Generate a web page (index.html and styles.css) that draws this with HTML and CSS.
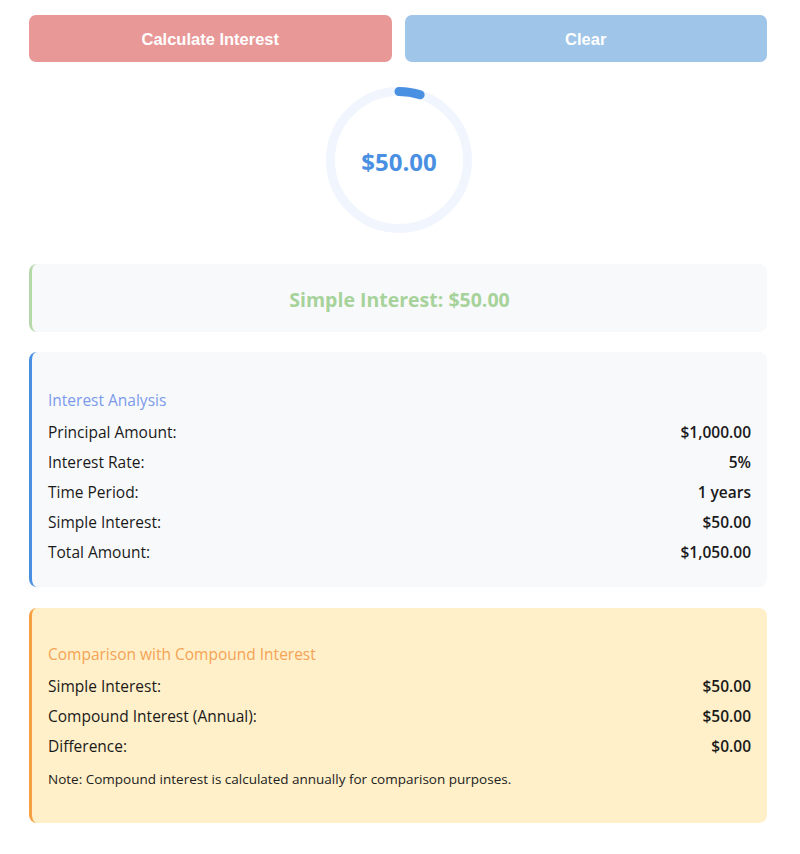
FILE: index.html
```html
<!DOCTYPE html>
<html lang="en">
<head>
<meta charset="utf-8">
<title>Simple Interest Calculator</title>
<link rel="stylesheet" href="styles.css">
</head>
<body>
<div class="app">
  <div class="actions">
    <button class="btn btn-calc" type="button">Calculate Interest</button>
    <button class="btn btn-clear" type="button">Clear</button>
  </div>

  <div class="gauge-wrap">
    <div class="gauge">
      <svg class="gauge-svg" width="146" height="146" viewBox="0 0 146 146">
        <circle cx="73" cy="73" r="68.5" fill="none" stroke="#f1f5fd" stroke-width="9"/>
        <circle cx="73" cy="73" r="68.5" fill="none" stroke="#4a90e2" stroke-width="9" stroke-linecap="round"
          stroke-dasharray="21.5 500" transform="rotate(-90 73 73)"/>
      </svg>
      <div class="gauge-value">$50.00</div>
    </div>
  </div>

  <div class="result">Simple Interest: $50.00</div>

  <div class="panel panel-analysis">
    <h4 class="panel-title">Interest Analysis</h4>
    <div class="row"><span>Principal Amount:</span><strong>$1,000.00</strong></div>
    <div class="row"><span>Interest Rate:</span><strong>5%</strong></div>
    <div class="row"><span>Time Period:</span><strong>1 years</strong></div>
    <div class="row"><span>Simple Interest:</span><strong>$50.00</strong></div>
    <div class="row"><span>Total Amount:</span><strong>$1,050.00</strong></div>
  </div>

  <div class="panel panel-compare">
    <h4 class="panel-title">Comparison with Compound Interest</h4>
    <div class="row"><span>Simple Interest:</span><strong>$50.00</strong></div>
    <div class="row"><span>Compound Interest (Annual):</span><strong>$50.00</strong></div>
    <div class="row"><span>Difference:</span><strong>$0.00</strong></div>
    <p class="note">Note: Compound interest is calculated annually for comparison purposes.</p>
  </div>
</div>
</body>
</html>
```

FILE: styles.css
```css
* { box-sizing: border-box; }

body {
  margin: 0;
  background: #ffffff;
  font-family: "Open Sans", "Noto Sans", sans-serif;
  color: #1a1a1a;
}

.app {
  width: 738px;
  margin-left: 29px;
  padding-top: 15px;
}

.actions {
  display: flex;
  gap: 13px;
}

.btn {
  flex: 1;
  height: 47px;
  padding-top: 2px;
  border: none;
  border-radius: 7px;
  color: #ffffff;
  font-family: "Liberation Sans", Arial, sans-serif;
  font-weight: bold;
  font-size: 16.5px;
}

.btn-calc { background: #e99898; }
.btn-clear { background: #9fc5e8; }

.gauge-wrap {
  display: flex;
  justify-content: center;
  padding: 25px 0 31px;
}

.gauge {
  position: relative;
  width: 146px;
  height: 146px;
  margin-left: 2px;
}

.gauge-svg { display: block; }

.gauge-value {
  position: absolute;
  inset: 0;
  display: flex;
  align-items: center;
  justify-content: center;
  padding-top: 2px;
  color: #4a90e2;
  font-weight: 700;
  font-size: 24px;
}

.result {
  height: 68px;
  display: flex;
  align-items: center;
  justify-content: center;
  padding-top: 3px;
  background: #f8f9fb;
  border-left: 3px solid #b6d9a9;
  border-radius: 8px;
  color: #a7d39b;
  font-weight: 700;
  font-size: 19.5px;
  margin-bottom: 20px;
}

.panel {
  border-radius: 8px;
  padding: 37px 16px 20px 16px;
  margin-bottom: 21px;
}

.panel-analysis {
  background: #f8f9fb;
  border-left: 3px solid #4a90e2;
}

.panel-compare {
  background: #fff0c9;
  border-left: 3px solid #f7a043;
  padding-top: 35px;
}

.panel-title {
  margin: 0 0 6px;
  font-size: 15.5px;
  font-weight: 400;
  line-height: 22px;
}

.panel-analysis .panel-title { color: #7b9bea; }
.panel-compare .panel-title { color: #f4a356; }

.row {
  display: flex;
  justify-content: space-between;
  font-size: 15.5px;
  line-height: 20px;
  padding: 5px 0;
}

.row strong { font-weight: 600; color: #1a1a1a; }

.note {
  margin: 8px 0 14px;
  font-size: 13.5px;
  line-height: 20px;
  color: #222222;
}
```
